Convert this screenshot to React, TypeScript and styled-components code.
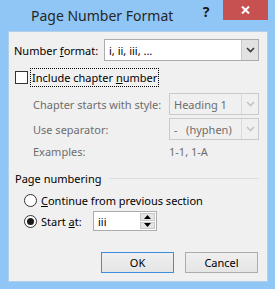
import React from 'react';
import styled, { createGlobalStyle } from 'styled-components';

const GlobalStyle = createGlobalStyle`
	html, body {
		margin: 0;
		padding: 0;
		background: #8fc6f6;
	}
	body {
		font-family: 'Noto Sans', 'Liberation Sans', sans-serif;
		font-size: 11px;
		color: #000;
	}
`;

const Frame = styled.div`
	width: 275px;
	height: 289px;
	box-sizing: border-box;
	background: #8fc6f6;
	padding: 0 7px 7px 8px;
	display: flex;
	flex-direction: column;
`;

const TitleBar = styled.div`
	height: 31px;
	display: flex;
	align-items: flex-start;
	flex-shrink: 0;
`;

const Title = styled.div`
	flex: 1;
	padding: 6px 0 0 23px;
	font-size: 14px;
	line-height: 20px;
	color: #262626;
`;

const HelpButton = styled.div`
	width: 14px;
	margin: 4px 10px 0 0;
	font-weight: bold;
	font-size: 14px;
	line-height: 16px;
	color: #1a1a1a;
	text-align: center;
`;

const CloseButton = styled.div`
	width: 45px;
	height: 20px;
	background: #c75050;
	display: flex;
	align-items: center;
	justify-content: center;
`;

const Client = styled.div`
	flex: 1;
	background: #f0f0f0;
	box-sizing: border-box;
	border: 1px solid #b2cfea;
	padding: 6px 8px 0 5px;
	display: flex;
	flex-direction: column;
`;

const Row = styled.div<{ $top: number; $height: number; $indent?: number }>`
	display: flex;
	align-items: center;
	margin-top: ${(p) => p.$top}px;
	height: ${(p) => p.$height}px;
	padding-left: ${(p) => p.$indent ?? 0}px;
	flex-shrink: 0;
`;

const Label = styled.span<{ $width?: number; $disabled?: boolean }>`
	display: inline-block;
	flex-shrink: 0;
	width: ${(p) => (p.$width ? `${p.$width}px` : 'auto')};
	color: ${(p) => (p.$disabled ? '#6d6d6d' : '#000')};
	white-space: nowrap;
`;

const Combo = styled.div<{ $disabled?: boolean }>`
	flex: 1;
	height: 22px;
	box-sizing: border-box;
	border: 1px solid ${(p) => (p.$disabled ? '#cacaca' : '#acacac')};
	background: ${(p) => (p.$disabled ? '#f0f0f0' : '#fff')};
	display: flex;
	align-items: stretch;
`;

const ComboText = styled.div<{ $disabled?: boolean }>`
	flex: 1;
	padding-left: 4px;
	display: flex;
	align-items: center;
	color: ${(p) => (p.$disabled ? '#6d6d6d' : '#000')};
	white-space: pre;
`;

const ComboButton = styled.div<{ $disabled?: boolean }>`
	width: 16px;
	border-left: 1px solid ${(p) => (p.$disabled ? '#dadada' : '#c8c8c8')};
	background: ${(p) => (p.$disabled ? '#f0f0f0' : '#e2e2e2')};
	display: flex;
	align-items: center;
	justify-content: center;
`;

const CheckBox = styled.div`
	width: 13px;
	height: 13px;
	flex-shrink: 0;
	box-sizing: border-box;
	border: 1px solid #333;
	background: #fff;
	margin: 0 3px 0 1px;
`;

const FocusLabel = styled.span`
	outline: 1px dotted #000;
	padding: 0 1px;
	line-height: 17px;
	white-space: nowrap;
`;

const GroupHeader = styled.div`
	display: flex;
	align-items: center;
	gap: 8px;
	margin-top: 11px;
	height: 16px;
	padding-left: 1px;
	&::after {
		content: '';
		flex: 1;
		height: 1px;
		background: #dcdcdc;
	}
`;

const Radio = styled.div<{ $checked?: boolean }>`
	width: 13px;
	height: 13px;
	flex-shrink: 0;
	box-sizing: border-box;
	border-radius: 50%;
	border: 1px solid #333;
	background: #fff;
	margin-right: 4px;
	display: flex;
	align-items: center;
	justify-content: center;
	&::after {
		content: '';
		display: ${(p) => (p.$checked ? 'block' : 'none')};
		width: 7px;
		height: 7px;
		border-radius: 50%;
		background: #1a1a1a;
	}
`;

const Spin = styled.div`
	width: 64px;
	height: 20px;
	box-sizing: border-box;
	border: 1px solid #acacac;
	background: #fff;
	display: flex;
`;

const SpinText = styled.div`
	flex: 1;
	padding-left: 4px;
	display: flex;
	align-items: center;
`;

const SpinButtons = styled.div`
	width: 15px;
	display: flex;
	flex-direction: column;
	padding: 1px;
	gap: 1px;
`;

const SpinHalf = styled.div`
	flex: 1;
	background: #e5e5e5;
	border: 1px solid #c8c8c8;
	display: flex;
	align-items: center;
	justify-content: center;
`;

const ButtonRow = styled.div`
	display: flex;
	justify-content: flex-end;
	gap: 11px;
	margin-top: 21px;
	padding-right: 1px;
`;

const Button = styled.div<{ $default?: boolean }>`
	width: 73px;
	height: 21px;
	box-sizing: border-box;
	border: 1px solid ${(p) => (p.$default ? '#3c8fdb' : '#acacac')};
	background: linear-gradient(#efefef, #e5e5e5);
	display: flex;
	align-items: center;
	justify-content: center;
`;

const Chevron: React.FC<{ color: string }> = ({ color }) => (
	<svg width="9" height="6" viewBox="0 0 9 6">
		<path d="M1 1 L4.5 4.5 L8 1" fill="none" stroke={color} strokeWidth="1.6" />
	</svg>
);

const Triangle: React.FC<{ up?: boolean }> = ({ up }) => (
	<svg width="7" height="4" viewBox="0 0 7 4">
		<path d={up ? 'M0 4 L3.5 0 L7 4 Z' : 'M0 0 L3.5 4 L7 0 Z'} fill="#000" />
	</svg>
);

const App: React.FC = () => {
	return (
		<>
			<GlobalStyle />
			<Frame>
				<TitleBar>
					<Title>Page Number Format</Title>
					<HelpButton>?</HelpButton>
					<CloseButton>
						<svg width="9" height="8" viewBox="0 0 9 8">
							<path d="M1 0.5 L8 7.5 M8 0.5 L1 7.5" stroke="#fff" strokeWidth="2" />
						</svg>
					</CloseButton>
				</TitleBar>

				<Client>
					<Row $top={1} $height={22}>
						<Label $width={90}>
							Number <u>f</u>ormat:
						</Label>
						<Combo>
							<ComboText>i, ii, iii, ...</ComboText>
							<ComboButton>
								<Chevron color="#3a3a3a" />
							</ComboButton>
						</Combo>
					</Row>

					<Row $top={7} $height={18}>
						<CheckBox />
						<FocusLabel>
							Include chapter <u>n</u>umber
						</FocusLabel>
					</Row>

					<Row $top={7} $height={22} $indent={19}>
						<Label $width={136} $disabled>
							Chapter starts with style:
						</Label>
						<Combo $disabled>
							<ComboText $disabled>Heading 1</ComboText>
							<ComboButton $disabled>
								<Chevron color="#c4c4c4" />
							</ComboButton>
						</Combo>
					</Row>

					<Row $top={3} $height={22} $indent={19}>
						<Label $width={136} $disabled>
							Use separator:
						</Label>
						<Combo $disabled>
							<ComboText $disabled>{'-   (hyphen)'}</ComboText>
							<ComboButton $disabled>
								<Chevron color="#c4c4c4" />
							</ComboButton>
						</Combo>
					</Row>

					<Row $top={3} $height={16} $indent={19}>
						<Label $width={136} $disabled>
							Examples:
						</Label>
						<Label $disabled>1-1, 1-A</Label>
					</Row>

					<GroupHeader>Page numbering</GroupHeader>

					<Row $top={5} $height={18} $indent={10}>
						<Radio />
						<Label>
							<u>C</u>ontinue from previous section
						</Label>
					</Row>

					<Row $top={2} $height={20} $indent={10}>
						<Radio $checked />
						<Label $width={52}>
							Start <u>a</u>t:
						</Label>
						<Spin>
							<SpinText>iii</SpinText>
							<SpinButtons>
								<SpinHalf>
									<Triangle up />
								</SpinHalf>
								<SpinHalf>
									<Triangle />
								</SpinHalf>
							</SpinButtons>
						</Spin>
					</Row>

					<ButtonRow>
						<Button $default>OK</Button>
						<Button>Cancel</Button>
					</ButtonRow>
				</Client>
			</Frame>
		</>
	);
};

export default App;
